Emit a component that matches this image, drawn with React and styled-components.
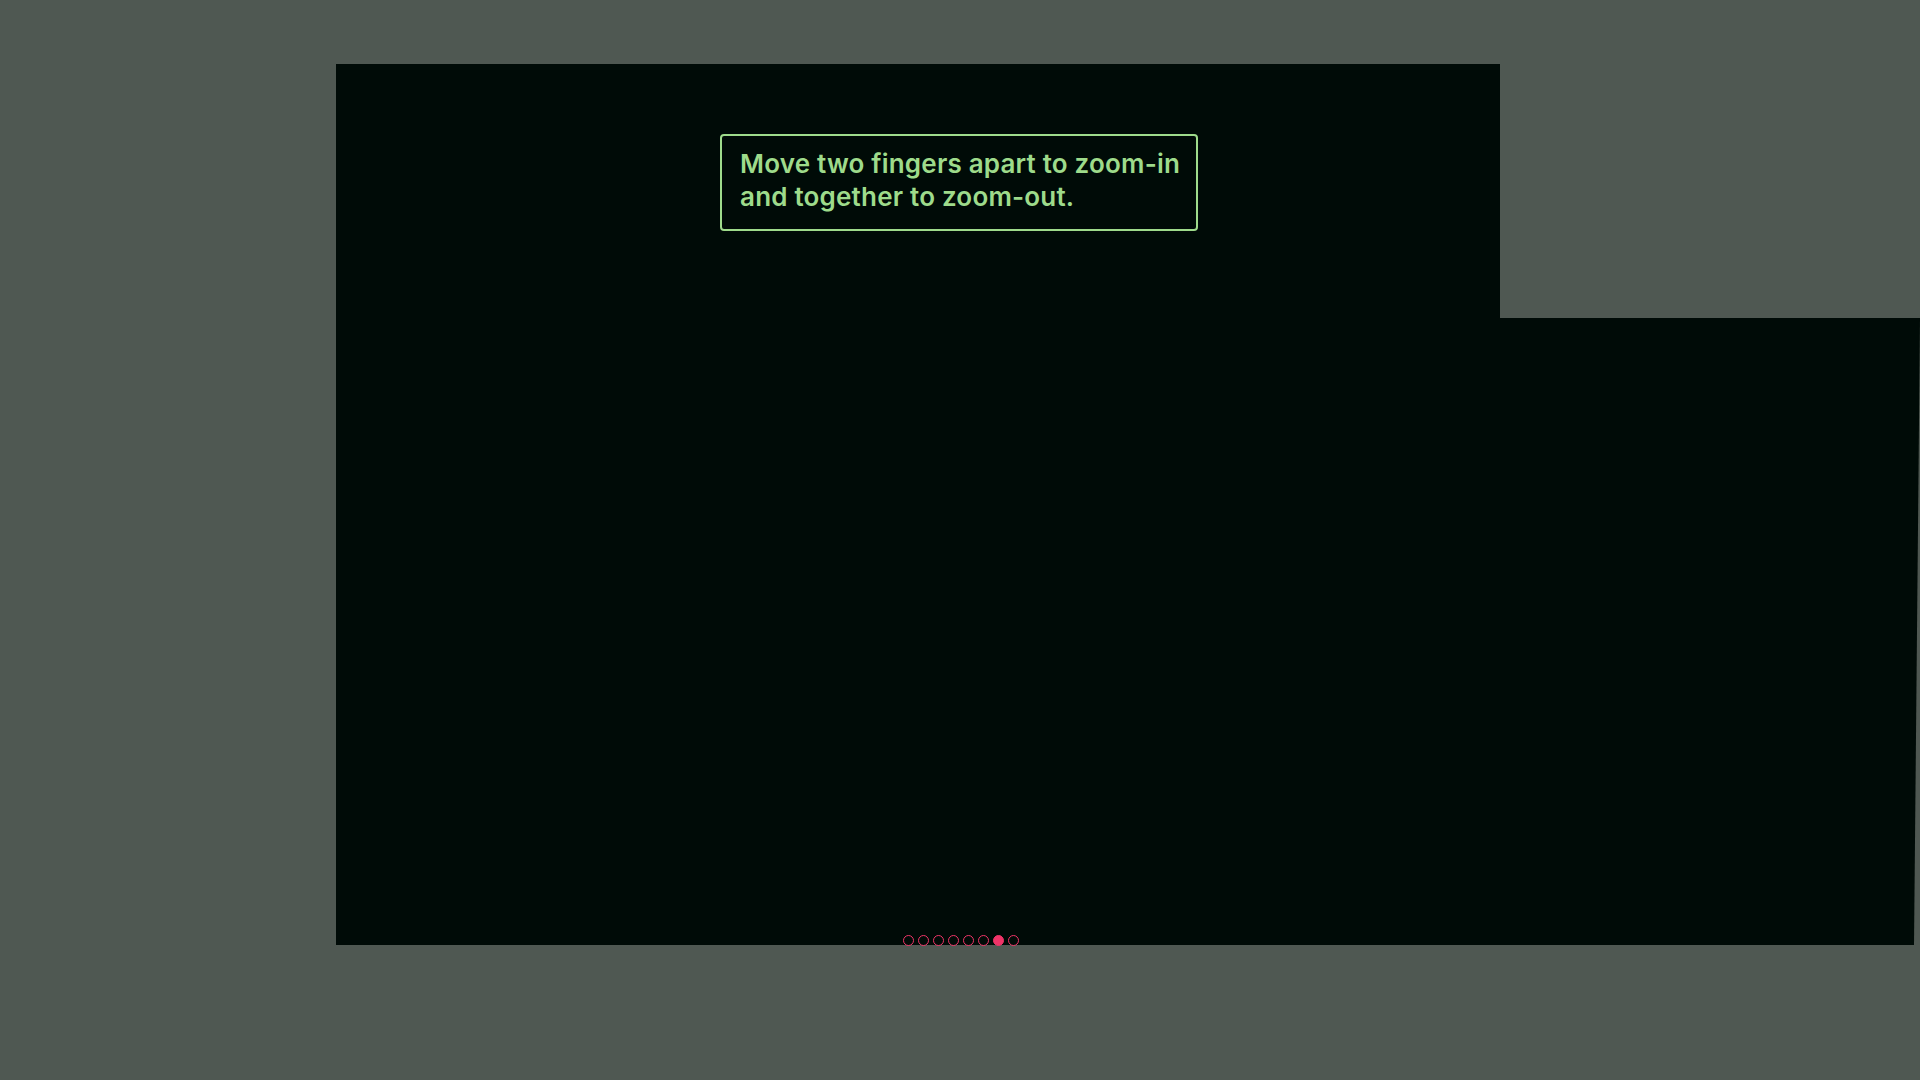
import React from "react";
import styled, { createGlobalStyle } from "styled-components";

const Global = createGlobalStyle`
  html, body { margin: 0; padding: 0; background: #4f5852; }
  body { font-family: Inter, "Noto Sans", sans-serif; overflow: hidden; }
`;

const Page = styled.div`
  width: 1920px;
  height: 1080px;
  padding: 64px 0 0 336px;
  box-sizing: border-box;
  display: flex;
  align-items: flex-start;
`;

const MainPanel = styled.section`
  position: relative;
  width: 1164px;
  height: 881px;
  background: #000b07;
  display: flex;
  flex-direction: column;
  align-items: flex-start;
  padding: 70px 0 0 384px;
  box-sizing: border-box;
`;

const SidePanel = styled.div`
  flex: 1;
  margin-top: 254px;
  height: 627px;
  background: #000b07;
  clip-path: polygon(0 0, 100% 0, calc(100% - 6px) 100%, 0 100%);
`;

const Hint = styled.div`
  width: 478px;
  height: 97px;
  box-sizing: border-box;
  border: 2px solid #9edb8b;
  border-radius: 4px;
  padding: 11px 10px 0 18px;
  color: #9edb8b;
  font-size: 26px;
  font-weight: 600;
  line-height: 33px;
  letter-spacing: 0.2px;
  white-space: nowrap;
`;

const Dots = styled.div`
  position: absolute;
  left: 567px;
  bottom: -1px;
  display: flex;
  gap: 4px;
`;

const Dot = styled.span`
  width: 11px;
  height: 11px;
  box-sizing: border-box;
  border-radius: 50%;
  border: 1.5px solid #ef3468;
  background: ${(p) => (p.$active ? "#ef3468" : "transparent")};
`;

export default function App() {
  const count = 8;
  const active = 6;
  return (
    <>
      <Global />
      <Page>
        <MainPanel>
          <Hint>
            Move two fingers apart to zoom-in
            <br />
            and together to zoom-out.
          </Hint>
          <Dots>
            {Array.from({ length: count }).map((_, i) => (
              <Dot key={i} $active={i === active} />
            ))}
          </Dots>
        </MainPanel>
        <SidePanel />
      </Page>
    </>
  );
}
